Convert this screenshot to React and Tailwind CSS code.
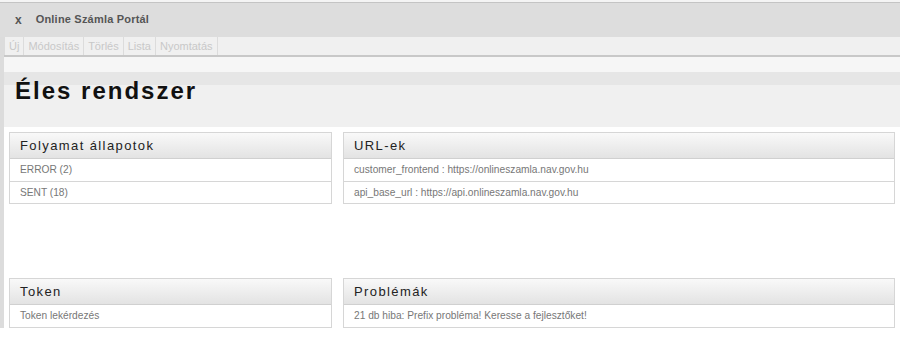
import React from 'react';

const tools = ['Új', 'Módosítás', 'Törlés', 'Lista', 'Nyomtatás'];

function Panel({ title, rows, className }) {
  return (
    <div className={`border border-[#d6d6d6] bg-white ${className}`}>
      <div className="h-[26px] flex items-center px-[10px] border-b border-[#d0d0d0] bg-gradient-to-b from-[#f9f9f9] to-[#e3e3e3] text-[13px] tracking-[1.4px] text-[#222]">
        {title}
      </div>
      {rows.map((r, i) => (
        <div
          key={r}
          className={`h-[22px] flex items-center px-[10px] text-[10.2px] text-[#777] ${i > 0 ? 'border-t border-[#d6d6d6]' : ''}`}
        >
          {r}
        </div>
      ))}
    </div>
  );
}

export default function App() {
  return (
    <div className="w-[900px] h-[364px] overflow-hidden bg-white font-['Liberation_Sans',Arial,sans-serif]">
      {/* title bar */}
      <div className="h-[37px] bg-[#dddddd] border-t-[2px] border-[#f4f4f4] shadow-[inset_0_1px_0_#c4c4c4] flex items-center text-[11px] font-bold text-[#555]">
        <span className="ml-[15px] mr-[14px] text-[12px]">x</span>
        <span className="tracking-[0.2px]">Online Számla Portál</span>
      </div>

      <div className="flex">
        <div className="w-[4px] bg-[#dcdcdc] shrink-0" />
        <div className="flex-1">
          {/* toolbar */}
          <div className="h-[20px] bg-[#f0f0f0] border-b-2 border-[#c8c8c8] flex items-stretch">
            <div className="flex border-l border-[#dcdcdc]">
              {tools.map((t) => (
                <div key={t} className="px-[4px] flex items-center border-r border-[#dcdcdc] text-[11px] text-[#c8c8c8]">
                  {t}
                </div>
              ))}
            </div>
          </div>

          {/* heading */}
          <div className="bg-[#f0f0f0]">
            <div className="h-[15px] bg-[#f6f6f6]" />
            <div className="h-[13px] bg-[#e6e6e6]" />
            <div className="h-[42px] relative">
              <h1 className="absolute left-[11px] top-[-6px] text-[24px] font-bold tracking-[2px] text-[#111] leading-none">
                Éles rendszer
              </h1>
            </div>
          </div>

          {/* panels */}
          <div className="px-[5px] pt-[5px]">
            <div className="flex gap-[11px]">
              <Panel className="w-[323px]" title="Folyamat állapotok" rows={['ERROR (2)', 'SENT (18)']} />
              <Panel className="flex-1" title="URL-ek" rows={['customer_frontend : https://onlineszamla.nav.gov.hu', 'api_base_url : https://api.onlineszamla.nav.gov.hu']} />
            </div>
            <div className="flex gap-[11px] mt-[74px]">
              <Panel className="w-[323px]" title="Token" rows={['Token lekérdezés']} />
              <Panel className="flex-1" title="Problémák" rows={['21 db hiba: Prefix probléma! Keresse a fejlesztőket!']} />
            </div>
          </div>
        </div>
      </div>
    </div>
  );
}
